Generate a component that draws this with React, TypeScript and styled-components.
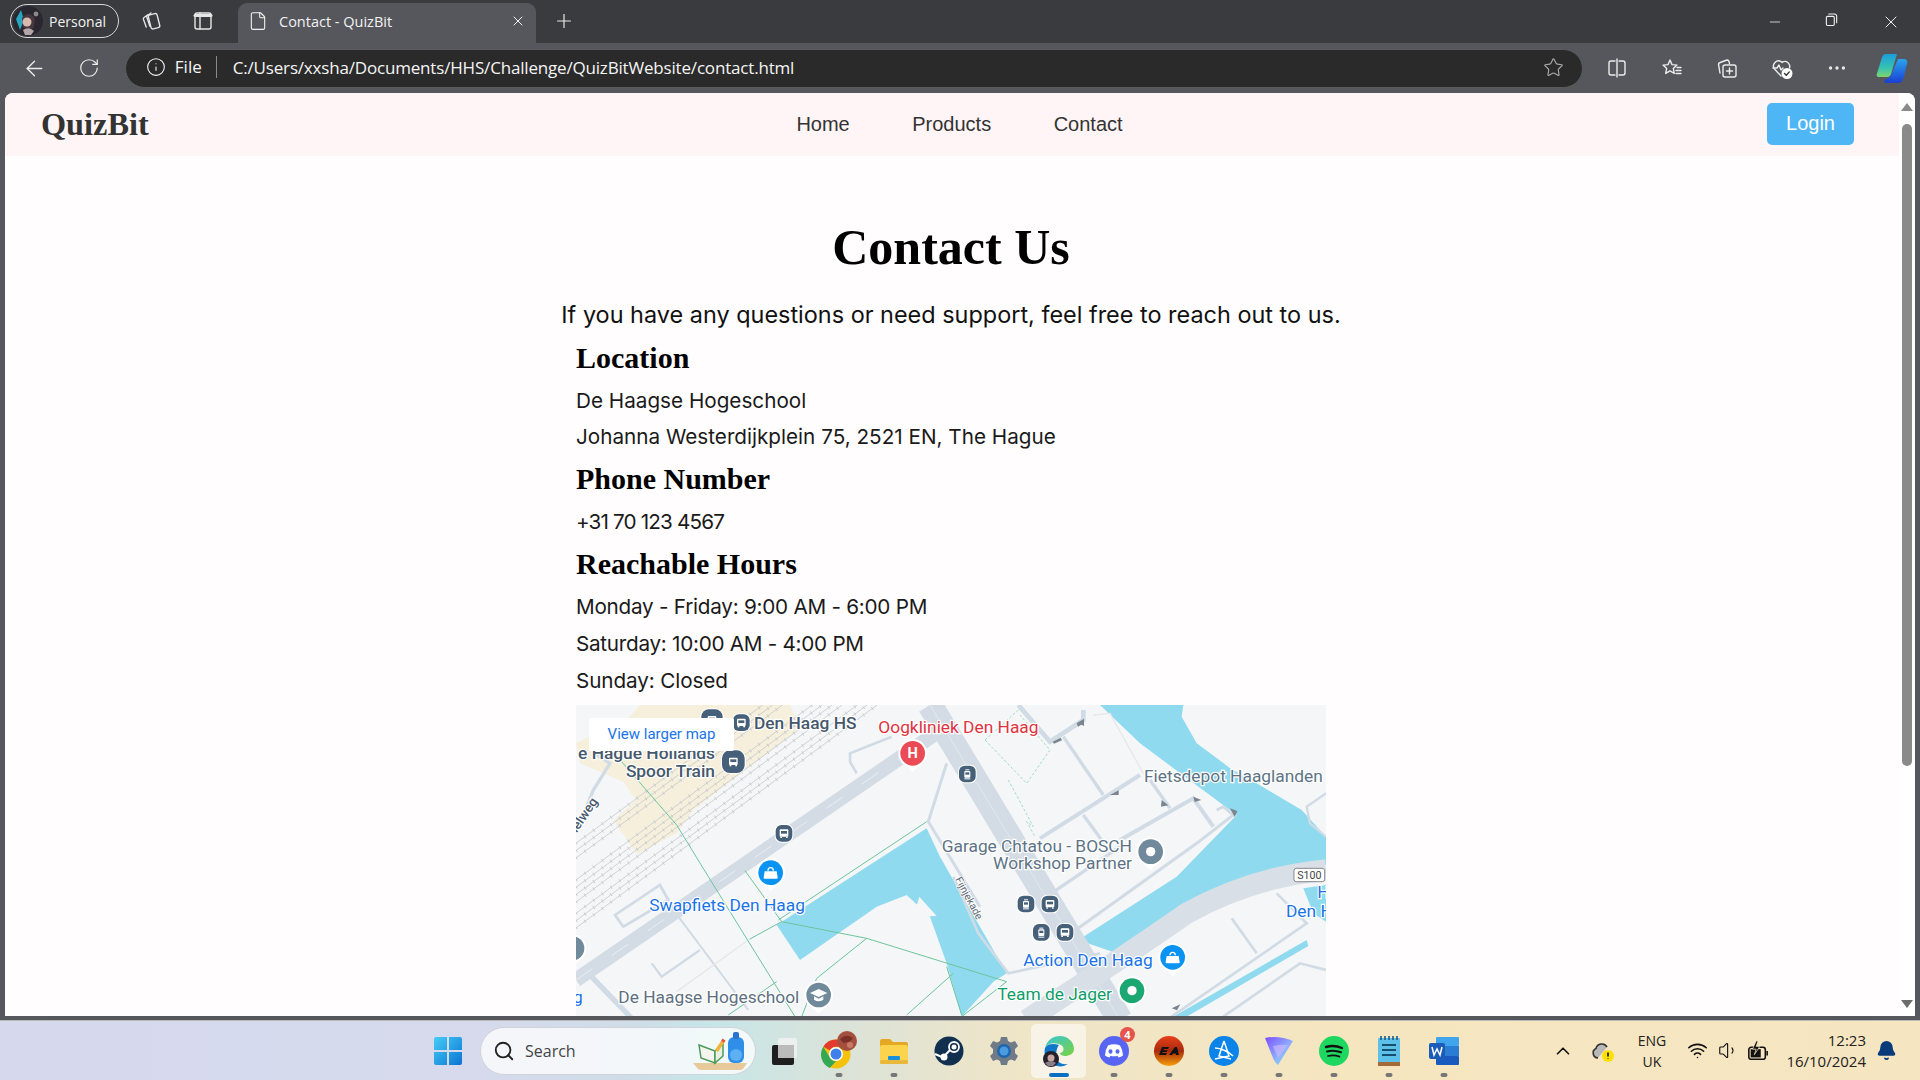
import React from "react";
import styled, { createGlobalStyle } from "styled-components";
import { ArrowLeft, RotateCw, Info, Star, Search, ChevronUp, Wifi, Volume1, Bell, X, Plus, Minus, File, MoreHorizontal } from "lucide-react";

const Global = createGlobalStyle`
  html, body { margin: 0; padding: 0; height: 100%; overflow: hidden; background: #56575c; }
  * { box-sizing: border-box; }
  #root { height: 100%; }
`;
const UI = `"Open Sans", "Noto Sans", "Liberation Sans", sans-serif`;

const Screen = styled.div`width:1920px;height:1080px;display:flex;flex-direction:column;background:#56575c;overflow:hidden;`;
const TitleBar = styled.div`height:43px;background:#3a3b3f;display:flex;align-items:flex-end;padding-left:10px;color:#fff;flex:none;`;
const Profile = styled.div`width:109px;height:34px;margin:0 6px 5px 0;border:1.5px solid #d8d8d8;border-radius:17px;display:flex;align-items:center;gap:6px;padding-left:2px;font:14px ${UI};color:#f2f2f2;`;
const StripBtn = styled.div`width:52px;height:34px;margin-bottom:5px;display:flex;align-items:center;justify-content:center;color:#e6e6e6;`;
const Tab = styled.div`width:298px;height:40px;margin-left:9px;background:#56575c;border-radius:9px 9px 0 0;display:flex;align-items:center;padding:0 10px 4px;gap:11px;font:14.5px ${UI};color:#f2f2f2;`;
const TabTitle = styled.span`flex:1;`;
const NewTab = styled.div`width:38px;height:34px;margin:0 0 5px 9px;display:flex;align-items:center;justify-content:center;color:#e8e8e8;`;
const WinCtrls = styled.div`margin-left:auto;display:flex;align-self:stretch;`;
const WinBtn = styled.div`width:58px;display:flex;align-items:center;justify-content:center;color:#f0f0f0;`;
const Toolbar = styled.div`height:50px;flex:none;display:flex;align-items:center;padding-left:7px;color:#ececec;`;
const NavBtn = styled.div`width:55px;height:36px;display:flex;align-items:center;justify-content:center;`;
const Address = styled.div`width:1460px;height:39px;margin-left:8px;background:#2a2a2a;border:1px solid #5c5c5c;border-radius:20px;display:flex;align-items:center;padding:0 18px 2px 20px;font:17px ${UI};color:#f5f5f5;`;
const Chip = styled.span`margin-left:9px;padding-right:14px;border-right:1px solid #8a8a8a;line-height:22px;`;
const Url = styled.span`margin-left:16px;flex:1;letter-spacing:-.18px;`;
const TBIcons = styled.div`display:flex;margin-left:7px;`;
const TBIcon = styled.div`width:55px;height:36px;display:flex;align-items:center;justify-content:center;`;
const Viewport = styled.div`flex:none;height:923px;margin:0 5px 0 5px;background:#fffdfd;border-radius:8px 8px 0 0;display:flex;overflow:hidden;`;
const Page = styled.div`flex:1;min-width:0;display:flex;flex-direction:column;`;
const Navbar = styled.nav`height:63px;flex:none;background:#fff5f6;display:grid;grid-template-columns:1fr auto 1fr;align-items:center;padding:0 45px 0 36px;`;
const Brand = styled.div`font:bold 32.3px "Liberation Serif", serif;color:#333;`;
const NavLinks = styled.div`display:flex;gap:62.5px;margin-left:24px;font:20px "Liberation Sans", sans-serif;color:#333;`;
const Login = styled.button`justify-self:end;width:87px;height:42px;margin-bottom:2px;background:#4fb6f6;color:#fff;border:none;border-radius:5px;font:20px "Liberation Sans", sans-serif;`;
const Main = styled.main`width:752px;padding-right:2px;margin:0 auto;display:flex;flex-direction:column;flex:1;min-height:0;`;
const H1 = styled.h1`margin:61px 0 0;text-align:center;font:bold 50px/60px "Liberation Serif", serif;color:#000;`;
const Lead = styled.p`margin:22px -40px 0;text-align:center;font:23.45px/32px Inter, sans-serif;color:#111;white-space:nowrap;`;
const H2 = styled.h2`margin:5.4px 0 7px;font:bold 30px/36px "Liberation Serif", serif;color:#000;`;
const Line = styled.p<{ $ls?: number }>`margin:0;font:20.7px/36.6px Inter, sans-serif;color:#1a1a1a;letter-spacing:${p => p.$ls ?? 0}px;`;
const Details = styled.div`margin-top:3.4px;`;
const MapFrame = styled.div`position:relative;margin-top:5.7px;height:311px;width:750px;flex:none;overflow:hidden;background:#f5f6f7;`;
const MapLink = styled.a`position:absolute;left:13px;top:13px;width:145px;height:33px;background:#fff;border-radius:2px;display:flex;align-items:center;justify-content:center;font:15px Roboto, sans-serif;color:#1a73e8;`;
const Scrollbar = styled.div`width:16px;flex:none;background:#fff;display:flex;flex-direction:column;align-items:center;padding:10px 0 8px;`;
const Arrow = styled.div<{ $down?: boolean }>`width:0;height:0;border-left:6px solid transparent;border-right:6px solid transparent;${p => p.$down ? "border-top:8px solid #6b6b6b;" : "border-bottom:8px solid #8a8a8a;"}`;
const Thumb = styled.div`width:10px;height:642px;margin-top:13px;border-radius:5px;background:#8a8a8a;`;
const Spacer = styled.div`flex:1;`;
const Taskbar = styled.div`flex:none;margin-top:4px;height:60px;display:flex;align-items:center;padding-left:420px;border-top:1px solid #b9b9b9;background:linear-gradient(90deg,#d6d9ee 0%,#d6daec 25%,#cfdde8 33%,#c6e6e8 37%,#dbe3d9 44%,#eee5c8 52%,#f5e6c0 70%,#f6e5c1 100%);`;
const TaskSlot = styled.div<{ $active?: boolean }>`position:relative;width:55px;height:54px;display:flex;align-items:center;justify-content:center;border-radius:5px;${p => p.$active ? "background:rgba(255,255,255,.55);" : ""}`;
const Dot = styled.span<{ $active?: boolean }>`position:absolute;bottom:1px;left:50%;transform:translateX(-50%);height:3.5px;border-radius:2px;width:${p => p.$active ? "20px" : "7px"};background:${p => p.$active ? "#0a6fc2" : "#777"};`;
const Badge = styled.span`position:absolute;right:6px;top:3px;width:15px;height:15px;border-radius:50%;background:#e5534b;color:#fff;font:bold 11px/15px "Open Sans", sans-serif;text-align:center;`;
const SearchBox = styled.div`width:276px;height:48px;margin-left:5px;border-radius:24px;background:rgba(255,255,255,.75);border:1px solid #cfd3dc;display:flex;align-items:center;padding:0 6px 0 12px;gap:10px;font:16px ${UI};color:#444;`;
const SearchText = styled.span`flex:1;`;
const Tray = styled.div`margin-left:auto;display:flex;align-items:center;padding-right:14px;color:#111;`;
const TrayIcon = styled.div<{ $w: number }>`width:${p => p.$w}px;display:flex;justify-content:center;`;
const Lang = styled.div`width:56px;text-align:center;font:14px/21px ${UI};color:#222;`;
const Clock = styled.div`width:92px;text-align:right;font:15px/21px ${UI};color:#222;white-space:nowrap;`;

const S = ({ children, size = 24, vb = "0 0 24 24" }: { children: React.ReactNode; size?: number; vb?: string }) => (
  <svg width={size} height={size} viewBox={vb} fill="none" stroke="currentColor" strokeWidth={1.4} strokeLinecap="round" strokeLinejoin="round">{children}</svg>
);

const Avatar = () => (
  <svg width={30} height={30} viewBox="0 0 30 30">
    <circle cx="15" cy="15" r="15" fill="#2b2730" /><path d="M3 13 8 4l3 10-4 10z" fill="#27a6c0" />
    <path d="M9 12q6-8 13 0l-1 9-5 5-6-5z" fill="#463640" /><circle cx="14" cy="16" r="4.5" fill="#d9b9ae" />
    <circle cx="23" cy="8" r="2.4" fill="#8b8b8b" /><path d="M10 24q6-4 11 1l-3 4h-6z" fill="#b4a5a8" />
  </svg>
);
const Workspaces = () => <S size={24}><path d="M8.500 6 5 8.500c-.6.4-.8 1-.6 1.600l2.800 8" /><path d="M12 4 8.300 6.500c-.5.4-.7 1-.5 1.500l3 9" /><rect x="10.500" y="5" width="9" height="14.500" rx="2" transform="rotate(-14 15 12)" /></S>;
const VerticalTabs = () => <S size={24}><rect x="4" y="4" width="16" height="16" rx="2" /><path d="M9 4v16" /><path d="M4 6.500h16" strokeWidth={3} /></S>;
const RestoreIcon = () => <S size={19}><rect x="3" y="5.500" width="10" height="11.500" rx="1.500" /><path d="M6 2.500h7a3 3 0 0 1 3 3v8" /></S>;
const SplitIcon = () => <S size={24}><path d="M10 5H6a2 2 0 0 0-2 2v10a2 2 0 0 0 2 2h4" /><path d="M14 5h4a2 2 0 0 1 2 2v10a2 2 0 0 1-2 2h-4" /><path d="M12 3v18" /></S>;
const FavIcon = () => <S size={24}><path d="m10 4 2 4.600 5 .5-3.700 3.300 1 5-4.300-2.600-4.300 2.600 1-5L3 9.100l5-.5z" /><path d="M17 11.500h4M16 14.500h5M16 17.500h5" /></S>;
const CollIcon = () => <S size={24}><path d="M5 17 3.600 8.800A2 2 0 0 1 5.200 6.500L12 4a2 2 0 0 1 2 1.500l.5 2" /><rect x="8" y="9" width="13" height="12" rx="2" /><path d="M14.500 12v6M11.500 15h6" /></S>;
const HealthIcon = () => (
  <S size={24}><path d="M11 20 4.500 13a5 5 0 0 1 7-7l.5.5.5-.5a5 5 0 0 1 7 6" /><path d="M3 12h4l2-3 2 5 2-2" />
    <circle cx="17" cy="17.500" r="5.500" fill="#fff" stroke="none" /><path d="m14.500 17.500 1.800 1.800 3-3.400" stroke="#333" /></S>
);
const Copilot = () => (
  <svg width={32} height={32} viewBox="0 0 32 32">
    <defs>
      <linearGradient id="cpa" x1="0" y1="0" x2="0" y2="1"><stop offset="0" stopColor="#1b9de0" /><stop offset=".6" stopColor="#36c2b0" /><stop offset="1" stopColor="#7fd66f" /></linearGradient>
      <linearGradient id="cpb" x1="0" y1="0" x2="0" y2="1"><stop offset="0" stopColor="#2aa3f0" /><stop offset="1" stopColor="#1a3fd0" /></linearGradient>
    </defs>
    <path d="M10 2h11l-6 20c-.7 2-1.800 3-4 3H3c-2 0-2.700-1.500-2.200-3l5-16C6.500 3.500 8 2 10 2z" fill="url(#cpa)" />
    <path d="M22 7h6c2.500 0 3.800 1.800 3.200 4l-3.700 15c-.8 3-2.500 5-5.500 5H10c-2 0-2.500-1.800-1-3 3-2 6-3 7-7z" fill="url(#cpb)" />
  </svg>
);
const WinLogo = () => (
  <svg width={30} height={30} viewBox="0 0 30 30">
    <defs><linearGradient id="wl" x1="0" y1="0" x2="1" y2="1"><stop offset="0" stopColor="#46cdf7" /><stop offset="1" stopColor="#0a74d2" /></linearGradient></defs>
    <path d="M1 3a2 2 0 0 1 2-2h11v13H1zM16 1h11a2 2 0 0 1 2 2v11H16zM1 16h13v13H3a2 2 0 0 1-2-2zM16 16h13v11a2 2 0 0 1-2 2H16z" fill="url(#wl)" />
  </svg>
);
const SearchArt = () => (
  <svg width={58} height={40} viewBox="0 0 58 40">
    <path d="M2 32h54l-4 6a5 5 0 0 1-3 1H10a5 5 0 0 1-3-1z" fill="#e7c99a" />
    <path d="M8 14 24 20v12L10 27z" fill="#f5f5ef" stroke="#4d9a5b" strokeWidth="1.500" /><path d="m24 20 8-7v12l-8 7z" fill="#e8f0e4" stroke="#4d9a5b" strokeWidth="1.500" />
    <path d="m24 19 6-9 3 2-6 9z" fill="#f0b43a" /><path d="m30 10 1.500-2.500 3 2L33 12z" fill="#e4553c" />
    <rect x="37" y="6" width="16" height="26" rx="6" fill="#2f8fe8" /><circle cx="45" cy="24" r="6" fill="#5fb0f2" /><rect x="42" y="1" width="6" height="7" rx="2" fill="#2a70d0" />
  </svg>
);
const TaskView = () => (
  <svg width={26} height={28} viewBox="0 0 26 28">
    <rect x="1" y="8" width="22" height="20" rx="2" fill="#1f1f1f" /><rect x="7" y="1" width="19" height="20" rx="2" fill="#f3f3f3" opacity=".8" /><rect x="7" y="8" width="16" height="13" fill="#bbb" />
  </svg>
);
const Chrome = () => (
  <svg width={40} height={40} viewBox="0 0 40 40">
    <g transform="translate(2 8)">
      <circle cx="15" cy="15" r="14.500" fill="#f4c20d" /><path d="M15 .5a14.500 14.500 0 0 1 12.600 7.250H15a7.250 7.250 0 0 0-6.300 3.600L2.400 7.750A14.500 14.500 0 0 1 15 .5z" fill="#e33b2e" />
      <path d="M2.400 7.750 8.700 18.600a7.250 7.250 0 0 0 6.300 3.650L8.700 29A14.500 14.500 0 0 1 2.400 7.750z" fill="#34a853" /><circle cx="15" cy="15" r="7" fill="#fff" /><circle cx="15" cy="15" r="5.500" fill="#3f80ea" />
    </g>
    <circle cx="28" cy="10" r="10" fill="#a5503f" /><path d="M21 8q6-6 13-1-3 5-7 4-2 3-6-3z" fill="#7a3028" /><circle cx="31" cy="14" r="3" fill="#c87a66" />
  </svg>
);
const Folder = () => (
  <svg width={30} height={30} viewBox="0 0 30 30"><path d="M1 5a2 2 0 0 1 2-2h8l3 3h13a2 2 0 0 1 2 2v3H1z" fill="#e5a823" /><rect x="1" y="9" width="28" height="19" rx="2" fill="#fcd34d" /><rect x="9" y="20" width="12" height="4" rx="1" fill="#1a8fdc" /><rect x="1" y="24" width="28" height="4" rx="1.500" fill="#e8b83a" /></svg>
);
const Steam = () => (
  <svg width={30} height={30} viewBox="0 0 30 30"><circle cx="15" cy="15" r="14.500" fill="#11304f" /><circle cx="20" cy="11" r="5" fill="none" stroke="#fff" strokeWidth="1.800" /><circle cx="20" cy="11" r="2.500" fill="#fff" /><path d="M1 18l8 3.500L16 14" stroke="#fff" strokeWidth="2" fill="none" /><circle cx="10" cy="21" r="3.500" fill="#fff" /></svg>
);
const Gear = () => (
  <svg width={30} height={30} viewBox="0 0 30 30"><path d="m12 1h6l1 4 3 1.500 4-1.500 3 5-3 3v4l3 3-3 5-4-1.500-3 1.500-1 4h-6l-1-4-3-1.500-4 1.500-3-5 3-3v-4L1 10l3-5 4 1.500L11 5z" fill="#6f7c88" /><circle cx="15" cy="15" r="7" fill="#1f66ad" /><circle cx="15" cy="15" r="4.500" fill="#4a9be0" /></svg>
);
const Edge = () => (
  <svg width={34} height={34} viewBox="0 0 34 34">
    <defs><linearGradient id="eg" x1="0" y1="0" x2="1" y2="1"><stop offset="0" stopColor="#36c5d8" /><stop offset="1" stopColor="#7ad23f" /></linearGradient></defs>
    <path d="M3 14C5 6 11 2 18 2c8 0 14 6 14 13 0 5-5 7-9 7-2 0-5-1-5-3 5-1 5-7-1-9C11 8 5 10 3 14z" fill="url(#eg)" />
    <path d="M3 14c-2 8 3 17 12 18 4 1 8 0 11-2-6 1-12-2-12-8 0-6 2-10 3-11C11 9 5 10 3 14z" fill="#1078c8" />
    <circle cx="9" cy="25" r="8" fill="#24212a" /><circle cx="9" cy="24" r="3.500" fill="#c9a8a4" /><path d="M3 29q6-4 11 0l-3 3H6z" fill="#8a7d88" />
  </svg>
);
const Discord = () => (
  <svg width={30} height={30} viewBox="0 0 30 30"><circle cx="15" cy="15" r="15" fill="#5865f2" /><path d="M9 9.500q6-2.500 12 0 3 4.500 3 10-2 1.500-4.500 2l-1-1.700q-3.500 1-7 0l-1 1.700Q8 21 6 19.500q0-5.500 3-10z" fill="#fff" /><ellipse cx="11.500" cy="15.500" rx="2" ry="2.300" fill="#5865f2" /><ellipse cx="18.500" cy="15.500" rx="2" ry="2.300" fill="#5865f2" /></svg>
);
const EA = () => (
  <svg width={30} height={30} viewBox="0 0 30 30">
    <defs><linearGradient id="ea" x1="0" y1="0" x2="0" y2="1"><stop offset="0" stopColor="#e8401c" /><stop offset=".5" stopColor="#a82a0c" /><stop offset="1" stopColor="#f5a00a" /></linearGradient></defs>
    <circle cx="15" cy="15" r="15" fill="url(#ea)" /><path d="M5 19l3-8h7l-1 2H10l-.5 1.200h4l-.8 1.800h-4l-.4 1H13l-1 2zM15 19l6-8h2l2 8h-3l-.3-1.500h-2.500L18 19z" fill="#111" />
  </svg>
);
const Battle = () => (
  <svg width={30} height={30} viewBox="0 0 30 30"><circle cx="15" cy="15" r="15" fill="#0a84e8" /><g fill="none" stroke="#fff" strokeWidth="1.500"><path d="M15 5 10 20l12 3" /><path d="M15 5l5 15-14 3" /><path d="M6 12c6 0 14 4 18 8" /></g></svg>
);
const Proton = () => (
  <svg width={30} height={30} viewBox="0 0 30 30"><defs><linearGradient id="pv" x1="0" y1="0" x2="1" y2="1"><stop offset="0" stopColor="#7c4dff" /><stop offset=".6" stopColor="#8fb4ff" /><stop offset="1" stopColor="#6fe8e0" /></linearGradient></defs><path d="M1 2q14-3 28 3L14 29Q11 27 9 22z" fill="url(#pv)" /><path d="M9 10q9-2 15-1L14 22z" fill="#c6b8ff" opacity=".7" /></svg>
);
const Spotify = () => (
  <svg width={30} height={30} viewBox="0 0 30 30"><circle cx="15" cy="15" r="15" fill="#1ed760" /><g fill="none" stroke="#111" strokeLinecap="round"><path d="M7 11q8-2.500 16 1" strokeWidth="2.400" /><path d="M8 15.500q7-2 14 .8" strokeWidth="2" /><path d="M9 20q6-1.500 11.500.6" strokeWidth="1.700" /></g></svg>
);
const Notepad = () => (
  <svg width={26} height={32} viewBox="0 0 26 32"><rect x="2" y="3" width="22" height="27" rx="1" fill="#5cc0e8" /><rect x="2" y="27" width="22" height="4" fill="#a56a38" /><path d="M6 10h14M6 15h14M6 20h14" stroke="#14506e" strokeWidth="2" /><path d="M5 1v4M9 1v4M13 1v4M17 1v4M21 1v4" stroke="#1c5d84" strokeWidth="1.600" /></svg>
);
const Word = () => (
  <svg width={32} height={30} viewBox="0 0 32 30"><rect x="8" y="1" width="23" height="9" fill="#41a5ee" rx="1" /><rect x="8" y="10" width="23" height="10" fill="#2b7cd3" /><rect x="8" y="20" width="23" height="9" fill="#185abd" rx="1" /><rect x="1" y="7" width="16" height="16" rx="2" fill="#1a5cb8" /><path d="m4 11 2 8 3-6 3 6 2-8" fill="none" stroke="#fff" strokeWidth="1.500" /></svg>
);
const OneDriveWarn = () => (
  <svg width={24} height={24} viewBox="0 0 24 24"><path d="M7 19a5 5 0 0 1-2-9.500A6 6 0 0 1 16 8" fill="#b8b8b8" stroke="#333" strokeWidth="1.600" /><circle cx="17" cy="17" r="6" fill="#fce100" /><path d="M17 13.500v4M17 19.500v.5" stroke="#111" strokeWidth="1.600" /></svg>
);
const BatteryPlug = () => (
  <svg width={22} height={22} viewBox="0 0 24 24" fill="none" stroke="#111" strokeWidth="1.700"><rect x="2" y="8" width="18" height="13" rx="2.500" /><path d="M22 12v5" /><rect x="4" y="10" width="11" height="9" fill="#111" stroke="none" /><path d="M10 1 6 10h4l-2 6 6-9h-4l2-6z" fill="#111" stroke="#f5e6c0" strokeWidth=".8" /></svg>
);

/* ---- map drawing, in 3x coordinates ---- */
const L = ({ x, y, c = "#4b6075", fs = 52, a, children, rot, w }: { x: number; y: number; c?: string; fs?: number; a?: "end" | "middle"; rot?: number; w?: number; children: React.ReactNode }) => (
  <text x={x} y={y} fill={c} fontSize={fs} fontWeight={w} fontFamily="Roboto, sans-serif" textAnchor={a} stroke="#fff" strokeWidth={fs > 35 ? 7 : 4} paintOrder="stroke" transform={rot ? `rotate(${rot} ${x} ${y})` : undefined}>{children}</text>
);
const Pin = ({ x, y, c, children }: { x: number; y: number; c: string; children?: React.ReactNode }) => (
  <g transform={`translate(${x} ${y})`}>
    <circle r="43" fill="#fff" />
    <path d="M-37 20 0 56 37 20z" fill="#fff" />
    <circle r="37" fill={c} />{children}
  </g>
);
const Stop = ({ x, y, tram, r = 25 }: { x: number; y: number; tram?: boolean; r?: number }) => (
  <g transform={`translate(${x} ${y})`}>
    <rect x={-r - 3} y={-r - 3} width={2 * r + 6} height={2 * r + 6} rx={r * .8} fill="#fff" />
    <rect x={-r} y={-r} width={2 * r} height={2 * r} rx={r * .7} fill="#47607a" />
    {tram ? <g fill="#fff"><path d="M-6-14h12v3H-6z" /><rect x="-9" y="-9" width="18" height="20" rx="3" /><rect x="-6" y="-5" width="12" height="7" fill="#47607a" /><path d="M-9 13h18v3H-9z" /></g>
      : <g fill="#fff"><rect x="-13" y="-12" width="26" height="22" rx="3" /><rect x="-9" y="-7" width="18" height="8" fill="#47607a" /><rect x="-11" y="10" width="5" height="4" /><rect x="6" y="10" width="5" height="4" /></g>}
  </g>
);
const rails = [430, 452, 474, 540, 562, 584, 606, 640, 662, 684];

const MapArt = () => (
  <svg width={750} height={311} viewBox="0 0 750 311">
    <g transform="translate(-16 -5) scale(.33333)">
      <rect x="0" y="0" width="2400" height="1000" fill="#f5f6f7" />
      {/* station area */}
      <path d="M48 130 210 50 240 15H690L720 85 400 330 350 400 232 462 160 362 228 300 190 245 60 190z" fill="#f5efdc" />
      {/* water */}
      <path d="M650 675 1100 385 1140 470 1260 680 1340 820 1300 845 1205 950 1160 790 1110 650 1040 585 950 620 720 780z" fill="#8fdaef" />
      <path d="M1078 590 1130 648 1060 650z" fill="#f5f6f7" />
      <path d="M1620 15H1870L1865 50 1910 130 1985 185 2010 205 2090 250 2225 330 2298 410V495L2140 530 1960 590 1820 670 1670 760 1555 720 1850 530 2030 345 1740 130z" fill="#8fdaef" />
      <path d="M2230 565 2298 555V665L2260 640z" fill="#8fdaef" />
      <path d="M2240 720 2245 738 1880 950H1840z" fill="#8fdaef" />
      {/* rails */}
      <g fill="none" stroke="#c6cacf" strokeWidth="2.500">
        {rails.map(d => <path key={d} d={`M48 ${d}L${48 + (d - 15) * 1.35} 15`} />)}
        {rails.map(d => <path key={"t" + d} d={`M48 ${d}L${48 + (d - 15) * 1.35} 15`} strokeWidth="11" strokeDasharray="2.500 30" />)}
      </g>
      {/* minor roads */}
      <g fill="none" stroke="#d1dbe5" strokeWidth="10">
        <path d="M105 160 150 190 100 270 48 400" />
        <path d="M995 110 870 160V185L890 220" strokeWidth="8" />
        <path d="M1160 190 1105 365 1260 620" strokeWidth="9" />
        <path d="M165 645 300 555 325 600 190 680z" strokeWidth="8" />
        <path d="M355 650 565 930" strokeWidth="6" /><path d="M275 790 305 830 420 750" strokeWidth="7" />
        <path d="M85 820 220 960" strokeWidth="16" />
        <path d="M1375 15 1470 125 1570 60V30" strokeWidth="14" />
        <path d="M1510 110 1630 285" strokeWidth="10" />
        <path d="M1440 415 1740 225" strokeWidth="12" />
        <path d="M1570 345 1625 420" strokeWidth="10" />
        <path d="M1680 420 1900 295 1960 380" strokeWidth="12" />
        <path d="M1770 240 1830 325" strokeWidth="10" />
        <path d="M1460 590 1680 440" strokeWidth="10" />
        <path d="M1540 695 1910 430 2020 345 1990 320 1970 330" strokeWidth="9" />
        <path d="M1180 530 1255 700 1345 820 1620 760" strokeWidth="8" />
        <path d="M2015 655 2090 760" strokeWidth="8" /><path d="M1820 960 2240 670 2150 580" strokeWidth="8" />
        <path d="M1990 950 2220 790 2298 810" strokeWidth="8" /><path d="M2298 280 2240 320 2250 370 2298 410" strokeWidth="7" />
      </g>
      <g fill="none" stroke="#e6e8ea" strokeWidth="4"><path d="M1600 45 1650 40 1750 220" /><path d="M350 875 565 720" /></g>
      {/* main roads */}
      <path d="M48 840 1120 105" stroke="#d3dce5" strokeWidth="44" fill="none" />
      <path d="M48 840 1120 105" stroke="#e8edf1" strokeWidth="3" strokeDasharray="60 70" fill="none" />
      <path d="M1110 15 1680 960" stroke="#d3dce5" strokeWidth="76" fill="none" />
      <path d="M1110 15 1680 960" stroke="#e8edf1" strokeWidth="2" fill="none" />
      <path d="M1400 960Q1680 780 1880 640 2080 530 2298 510" stroke="#d8dfe6" strokeWidth="64" fill="none" />
      {/* green lines */}
      <g fill="none" stroke="#6cc49c" strokeWidth="3">
        <path d="M185 185 350 375 445 530 705 950" /><path d="M555 512 665 665 920 715 1340 845 1205 950" /><path d="M665 665 568 718" />
        <path d="M655 660 1100 365" /><path d="M920 715 770 835 725 950" /><path d="M505 945 650 845" /><path d="M1180 820 1040 945" />
        <path d="M1160 800 1205 945" />
      </g>
      <g fill="none" stroke="#8fd6b5" strokeWidth="2.500" strokeDasharray="8 6">
        <path d="M1275 120 1400 250 1470 150 1380 45M1375 30 1275 120" /><path d="M1345 240 1420 380 1400 365 1425 410" />
      </g>
      {/* arrows */}
      <g fill="#7a858f"><path d="m1478 125 24-12 4 8-24 10z" /><path d="m1550 70 22-14 0 22-8-4-10 6z" /><path d="m1650 285 26-14 0 14z" /><path d="m1805 300 20 16-22 4z" /><path d="m1900 290 24 10-20 6z" /><path d="m2010 325 14 26 8-18z" /><path d="m1835 925 26-12-10 18z" /></g>
      {/* pins and stops */}
      <Stop x={456} y={60} r={32} /><Stop x={544} y={68} />
      <Stop x={520} y={185} r={34} /><Stop x={672} y={400} />
      <Stop x={1222} y={222} tram /><Stop x={1398} y={612} tram /><Stop x={1470} y={612} /><Stop x={1444} y={697} tram /><Stop x={1515} y={697} />
      <Pin x={1058} y={160} c="#ea4b56"><text y="15" textAnchor="middle" fontFamily="Roboto, sans-serif" fontWeight="bold" fontSize="44" fill="#fff">H</text></Pin>
      <Pin x={632} y={518} c="#0a93f2"><path d="M-18-4h36l3 18a3 3 0 0 1-3 4h-36a3 3 0 0 1-3-4z" fill="#fff" /><path d="M-8-6a8 9 0 0 1 16 0" fill="none" stroke="#fff" strokeWidth="4" /></Pin>
      <Pin x={1772} y={455} c="#718a9b"><circle r="14" fill="#fff" /></Pin>
      <Pin x={1838} y={772} c="#0a93f2"><path d="M-18-4h36l3 18a3 3 0 0 1-3 4h-36a3 3 0 0 1-3-4z" fill="#fff" /><path d="M-8-6a8 9 0 0 1 16 0" fill="none" stroke="#fff" strokeWidth="4" /></Pin>
      <Pin x={1716} y={872} c="#1aa772"><circle r="14" fill="#fff" /></Pin>
      <Pin x={776} y={885} c="#718a9b"><path d="m-26-6 26-12 26 12-26 12z" fill="#fff" /><path d="M-14 4V14Q0 24 14 14V4L0 11z" fill="#fff" /></Pin>
      <Pin x={36} y={745} c="#718a9b" />
      {/* labels */}
      <L x={582} y={87} c="#46586c" w={500}>Den Haag HS</L>
      <L x={465} y={178} a="end" c="#46586c" w={500}>e Hague Hollands</L>
      <L x={465} y={230} a="end" c="#46586c" w={500}>Spoor Train</L>
      <L x={955} y={98} c="#e0323e">Oogkliniek Den Haag</L>
      <L x={268} y={632} c="#1a73e8">Swapfiets Den Haag</L>
      <L x={175} y={908} c="#5d6f80">De Haagse Hogeschool</L>
      <L x={50} y={400} rot={-56} fs={40} c="#46586c" w={500}>ielweg</L>
      <L x={68} y={908} c="#1a73e8" a="end">g</L>
      <L x={1752} y={245} c="#5d7385">Fietsdepot Haaglanden</L>
      <L x={1716} y={455} a="end" c="#5d7385">Garage Chtatou - BOSCH</L>
      <L x={1716} y={507} a="end" c="#5d7385">Workshop Partner</L>
      <L x={1778} y={797} a="end" c="#1a73e8">Action Den Haag</L>
      <L x={1656} y={900} a="end" c="#0f9d68">Team de Jager</L>
      <L x={1185} y={538} rot={62} fs={31} c="#5b6670">Fijnjekade</L>
      <L x={2178} y={650} c="#1a73e8">Den H</L>
      <L x={2272} y={595} c="#1a73e8">H</L>
      <g transform="translate(2202 505)"><rect width="92" height="40" rx="7" fill="#fff" stroke="#555" strokeWidth="2" /><text x="46" y="31" textAnchor="middle" fontSize="32" fontFamily="Roboto, sans-serif" fill="#444">S100</text></g>
    </g>
  </svg>
);

const apps: { el: React.ReactNode; dot?: boolean; active?: boolean; badge?: string }[] = [
  { el: <TaskView /> }, { el: <Chrome />, dot: true }, { el: <Folder />, dot: true }, { el: <Steam /> }, { el: <Gear /> },
  { el: <Edge />, dot: true, active: true }, { el: <Discord />, dot: true, badge: "4" }, { el: <EA />, dot: true }, { el: <Battle />, dot: true },
  { el: <Proton />, dot: true }, { el: <Spotify />, dot: true }, { el: <Notepad />, dot: true }, { el: <Word />, dot: true },
];

export default function App() {
  return (
    <Screen>
      <Global />
      <TitleBar>
        <Profile><Avatar />Personal</Profile>
        <StripBtn><Workspaces /></StripBtn>
        <StripBtn><VerticalTabs /></StripBtn>
        <Tab><File size={20} strokeWidth={1.3} /><TabTitle>Contact - QuizBit</TabTitle><X size={16} strokeWidth={1.5} /></Tab>
        <NewTab><Plus size={22} strokeWidth={1.3} /></NewTab>
        <WinCtrls>
          <WinBtn><Minus size={16} strokeWidth={1.2} /></WinBtn>
          <WinBtn><RestoreIcon /></WinBtn>
          <WinBtn><X size={20} strokeWidth={1.2} /></WinBtn>
        </WinCtrls>
      </TitleBar>
      <Toolbar>
        <NavBtn><ArrowLeft size={25} strokeWidth={1.3} /></NavBtn>
        <NavBtn><RotateCw size={22} strokeWidth={1.3} /></NavBtn>
        <Address>
          <Info size={20} strokeWidth={1.3} /><Chip>File</Chip>
          <Url>C:/Users/xxsha/Documents/HHS/Challenge/QuizBitWebsite/contact.html</Url>
          <Star size={21} strokeWidth={1.3} color="#a9a9a9" />
        </Address>
        <TBIcons>
          <TBIcon><SplitIcon /></TBIcon><TBIcon><FavIcon /></TBIcon><TBIcon><CollIcon /></TBIcon><TBIcon><HealthIcon /></TBIcon>
          <TBIcon><MoreHorizontal size={22} strokeWidth={1.6} /></TBIcon><TBIcon><Copilot /></TBIcon>
        </TBIcons>
      </Toolbar>
      <Viewport>
        <Page>
          <Navbar>
            <Brand>QuizBit</Brand>
            <NavLinks><span>Home</span><span>Products</span><span>Contact</span></NavLinks>
            <Login>Login</Login>
          </Navbar>
          <Main>
            <H1>Contact Us</H1>
            <Lead>If you have any questions or need support, feel free to reach out to us.</Lead>
            <Details>
              <H2>Location</H2>
              <Line>De Haagse Hogeschool</Line>
              <Line>Johanna Westerdijkplein 75, 2521 EN, The Hague</Line>
              <H2>Phone Number</H2>
              <Line $ls={-0.85}>+31 70 123 4567</Line>
              <H2>Reachable Hours</H2>
              <Line $ls={-0.25}>Monday - Friday: 9:00 AM - 6:00 PM</Line>
              <Line $ls={-0.27}>Saturday: 10:00 AM - 4:00 PM</Line>
              <Line $ls={-0.1}>Sunday: Closed</Line>
            </Details>
            <MapFrame>
              <MapArt />
              <MapLink>View larger map</MapLink>
            </MapFrame>
          </Main>
        </Page>
        <Scrollbar><Arrow /><Thumb /><Spacer /><Arrow $down /></Scrollbar>
      </Viewport>
      <Taskbar>
        <TaskSlot><WinLogo /></TaskSlot>
        <SearchBox><Search size={22} strokeWidth={2} color="#222" /><SearchText>Search</SearchText><SearchArt /></SearchBox>
        {apps.map((a, i) => (
          <TaskSlot key={i} $active={a.active}>{a.el}{a.badge && <Badge>{a.badge}</Badge>}{a.dot && <Dot $active={a.active} />}</TaskSlot>
        ))}
        <Tray>
          <TrayIcon $w={38}><ChevronUp size={22} strokeWidth={1.8} /></TrayIcon>
          <TrayIcon $w={42}><OneDriveWarn /></TrayIcon>
          <Lang>ENG<br />UK</Lang>
          <TrayIcon $w={34}><Wifi size={21} strokeWidth={1.8} /></TrayIcon>
          <TrayIcon $w={28}><Volume1 size={21} strokeWidth={1.3} /></TrayIcon>
          <TrayIcon $w={32}><BatteryPlug /></TrayIcon>
          <Clock>12:23<br />16/10/2024</Clock>
          <TrayIcon $w={40}><Bell size={21} color="#0b3a7a" fill="#0b3a7a" /></TrayIcon>
        </Tray>
      </Taskbar>
    </Screen>
  );
}
